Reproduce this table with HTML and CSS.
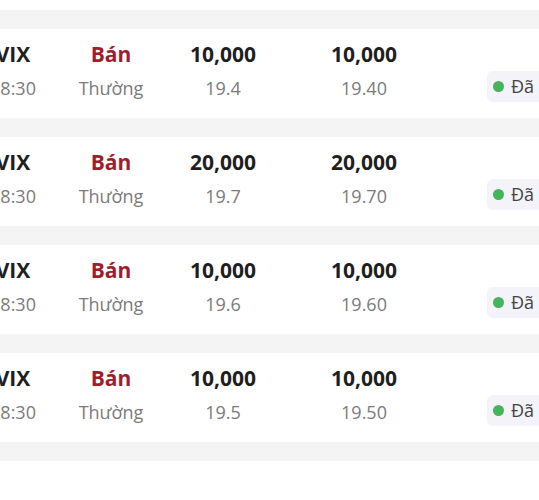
FILE: index.html
```html
<!DOCTYPE html>
<html lang="vi">
<head>
    <meta charset="UTF-8">
    <meta name="viewport" content="width=device-width, initial-scale=1.0">
    <title>Lệnh</title>
    <link rel="stylesheet" href="styles.css">
</head>
<body>
    <div class="order-list">
        <div class="gap"></div>
        <div class="order-row">
            <div class="col"><span class="main">VIX</span><span class="sub">08:30</span></div>
            <div class="col"><span class="main sell">Bán</span><span class="sub">Thường</span></div>
            <div class="col"><span class="main">10,000</span><span class="sub">19.4</span></div>
            <div class="col"><span class="main">10,000</span><span class="sub">19.40</span></div>
            <div class="col status"><span class="main"></span><span class="badge"><i class="dot"></i>Đã khớp</span></div>
        </div>
        <div class="gap"></div>
        <div class="order-row">
            <div class="col"><span class="main">VIX</span><span class="sub">08:30</span></div>
            <div class="col"><span class="main sell">Bán</span><span class="sub">Thường</span></div>
            <div class="col"><span class="main">20,000</span><span class="sub">19.7</span></div>
            <div class="col"><span class="main">20,000</span><span class="sub">19.70</span></div>
            <div class="col status"><span class="main"></span><span class="badge"><i class="dot"></i>Đã khớp</span></div>
        </div>
        <div class="gap"></div>
        <div class="order-row">
            <div class="col"><span class="main">VIX</span><span class="sub">08:30</span></div>
            <div class="col"><span class="main sell">Bán</span><span class="sub">Thường</span></div>
            <div class="col"><span class="main">10,000</span><span class="sub">19.6</span></div>
            <div class="col"><span class="main">10,000</span><span class="sub">19.60</span></div>
            <div class="col status"><span class="main"></span><span class="badge"><i class="dot"></i>Đã khớp</span></div>
        </div>
        <div class="gap"></div>
        <div class="order-row">
            <div class="col"><span class="main">VIX</span><span class="sub">08:30</span></div>
            <div class="col"><span class="main sell">Bán</span><span class="sub">Thường</span></div>
            <div class="col"><span class="main">10,000</span><span class="sub">19.5</span></div>
            <div class="col"><span class="main">10,000</span><span class="sub">19.50</span></div>
            <div class="col status"><span class="main"></span><span class="badge"><i class="dot"></i>Đã khớp</span></div>
        </div>
        <div class="gap"></div>
    </div>
</body>
</html>
```
FILE: styles.css
```css
body {
    font-family: "Open Sans", "Noto Sans", sans-serif;
    margin: 0;
    padding-top: 10px;
    background: #fff;
    overflow: hidden;
}

.order-list {
    display: flex;
    flex-direction: column;
}

.gap {
    height: 18.5px;
    background-color: #f4f4f4;
}

.order-row {
    height: 89.5px;
    box-sizing: border-box;
    padding-top: 8px;
    display: grid;
    grid-template-columns: 80px 116px 108px 174px 1fr;
    margin-left: -27px;
    white-space: nowrap;
}

.col {
    display: flex;
    flex-direction: column;
    align-items: center;
}

.main {
    height: 34px;
    line-height: 34px;
    font-size: 21px;
    font-weight: 700;
    color: #1f1f1f;
}

.main.sell {
    color: #a01e2c;
}

.sub {
    height: 34px;
    line-height: 34px;
    font-size: 18px;
    color: #7b7b7b;
}

.status {
    align-items: flex-start;
    padding-left: 36px;
}

.badge {
    display: flex;
    align-items: center;
    height: 31px;
    padding: 0 8px 0 6px;
    background-color: #f3f3f9;
    border-radius: 6px;
    font-size: 18px;
    color: #444;
}

.dot {
    width: 11px;
    height: 11px;
    border-radius: 50%;
    background-color: #46b45b;
    margin-right: 7px;
}
```
